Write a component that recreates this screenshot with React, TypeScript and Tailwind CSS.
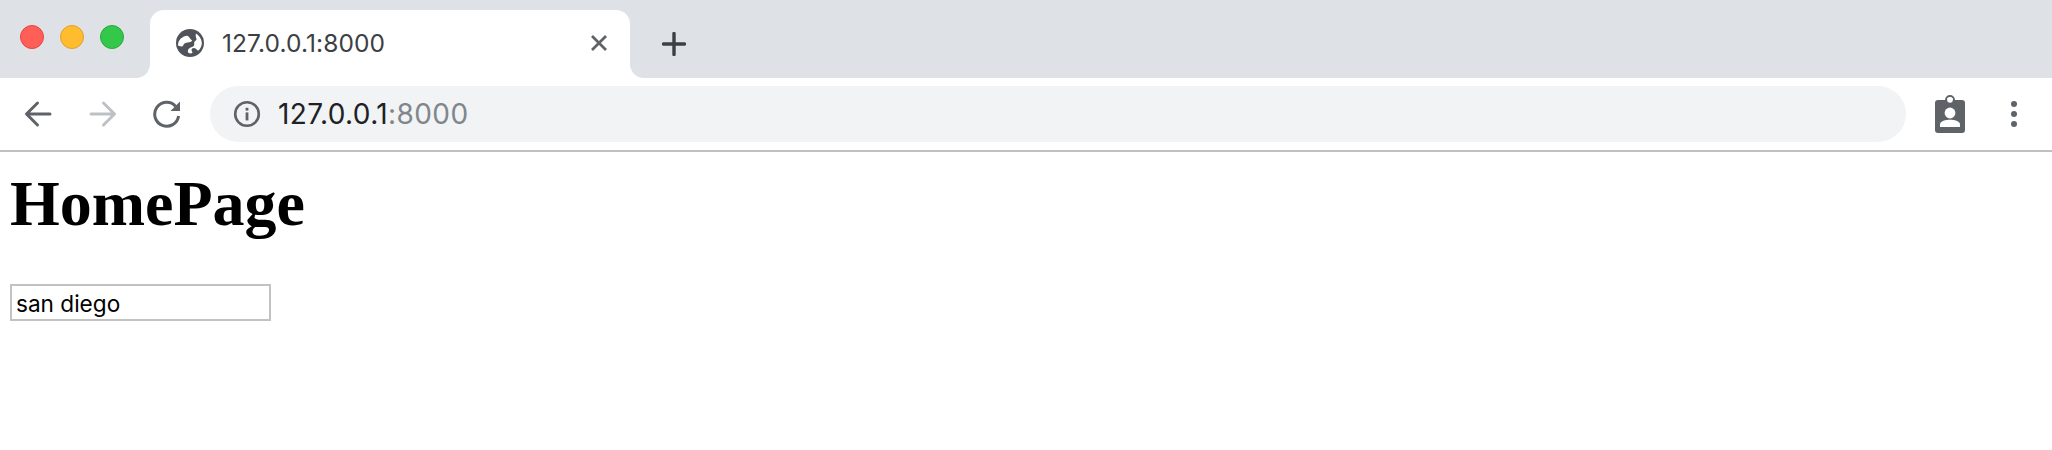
import React from 'react';

const TrafficLights = () => (
  <div className="flex items-center gap-[16px] pl-[20px] pt-[25px]">
    <div className="w-[24px] h-[24px] rounded-full bg-[#ff5f57] border border-[#e2463f]"></div>
    <div className="w-[24px] h-[24px] rounded-full bg-[#febc2e] border border-[#e1a029]"></div>
    <div className="w-[24px] h-[24px] rounded-full bg-[#34c84a] border border-[#28a93a]"></div>
  </div>
);

const GlobeIcon = () => (
  <svg width="28" height="28" viewBox="0 0 28 28" className="shrink-0">
    <circle cx="14" cy="14" r="14" fill="#50545a" />
    <path d="M2 16.5C2 12 4.5 9 8 7.5c2.4-1 4-.8 5 .4 1 1.2 1.6 2.6 3.2 3.4-.4 1.8-2.6 2.2-4.6 2.2-2 .1-3.4.8-4.2 2.4-.6 1.4-1.6 1.8-2.8 1.4-1-.3-2-.4-2.6-.8z" fill="#ffffff" />
    <path d="M20 4.5c2.6 1.6 5.4 4.8 5.8 9 .2 3-1.2 6.4-3.6 8.2-1.6-1-2.2-2.6-4-2.8-2-.2-3 1.2-2.6 2.6.3 1 1 1.6.8 2.4-1 .6-2.4.6-3.6.2-1.2-.6-1.2-2.4-.4-3.8.8-1.4 2.4-2 4.2-2.6 1.4-.6 1.8-1.8 1.6-3.2-.2-1.4.6-2.4 1.6-3 1-.6.8-1.6.4-2.4-.4-1.2-.8-2.6-.2-4.6z" fill="#ffffff" />
  </svg>
);

const BackIcon = ({ color, flip }: { color: string; flip?: boolean }) => (
  <svg width="28" height="28" viewBox="0 0 28 28" className={flip ? 'rotate-180' : ''}>
    <path
      d="M26 14H3M13.5 3 2.5 14l11 11"
      fill="none"
      stroke={color}
      strokeWidth="3"
      strokeLinecap="round"
      strokeLinejoin="round"
    />
  </svg>
);

const ReloadIcon = () => (
  <svg width="28" height="28" viewBox="0 0 28 28">
    <path d="M22.6 6.2A12 12 0 1 0 25.6 16" fill="none" stroke="#5f6368" strokeWidth="3" />
    <path d="M27 1.5V11H17.5z" fill="#5f6368" />
  </svg>
);

const InfoIcon = () => (
  <svg width="28" height="28" viewBox="0 0 28 28" className="shrink-0">
    <circle cx="14" cy="14" r="11.8" fill="none" stroke="#5f6368" strokeWidth="2.6" />
    <rect x="12.6" y="12.4" width="2.8" height="8" fill="#5f6368" />
    <rect x="12.6" y="7.8" width="2.8" height="2.8" fill="#5f6368" />
  </svg>
);

const ClipboardIcon = () => (
  <svg width="30" height="38" viewBox="0 0 30 38">
    <circle cx="15" cy="5" r="4" fill="none" stroke="#5f6368" strokeWidth="2" />
    <rect x="0" y="5" width="30" height="33" rx="3" fill="#5f6368" />
    <circle cx="15" cy="5" r="2.8" fill="#ffffff" />
    <circle cx="15" cy="18" r="5.4" fill="#ffffff" />
    <path d="M5 32v-2.5C5 26 11 24.8 15 24.8s10 1.2 10 4.7V32z" fill="#ffffff" />
  </svg>
);

export default function App() {
  return (
    <div className="min-h-[450px] bg-white font-['Liberation_Serif',serif] text-black">
      {/* tab strip */}
      <div className="flex h-[78px] bg-white">
        <div className="w-[150px] bg-[#dee1e6] rounded-br-[14px]">
          <TrafficLights />
        </div>
        <div className="w-[480px] bg-[#dee1e6] pt-[10px]">
          <div className="flex items-center h-full bg-white rounded-t-[14px] pl-[26px] pr-[22px] pb-[3px]">
            <GlobeIcon />
            <span className="ml-[18px] pt-[2px] text-[24.5px] tracking-[0.1px] text-[#3c4043] font-['Inter',sans-serif]">127.0.0.1:8000</span>
            <svg width="18" height="18" viewBox="0 0 18 18" className="ml-auto">
              <path d="M2 2l14 14M16 2 2 16" stroke="#5f6368" strokeWidth="2.8" fill="none" />
            </svg>
          </div>
        </div>
        <div className="flex flex-1 items-center bg-[#dee1e6] rounded-bl-[14px] pl-[32px] pt-[9px]">
          <svg width="24" height="24" viewBox="0 0 24 24">
            <path d="M12 1.5v21M1.5 12h21" stroke="#3c4043" strokeWidth="3.4" strokeLinecap="round" fill="none" />
          </svg>
        </div>
      </div>

      {/* toolbar */}
      <div className="flex items-center h-[74px] pl-[24px] pr-[24px] border-b-2 border-[#c0c0c0]">
        <BackIcon color="#5f6368" />
        <div className="ml-[37px]">
          <BackIcon color="#bdc1c6" flip />
        </div>
        <div className="ml-[36px]">
          <ReloadIcon />
        </div>
        <div className="flex flex-1 items-center h-[56px] ml-[29px] bg-[#f1f3f4] rounded-full pl-[23px]">
          <InfoIcon />
          <span className="ml-[17px] text-[28px] tracking-[0.4px] text-[#202124] font-['Inter',sans-serif]">
            127.0.0.1<span className="text-[#80868b]">:8000</span>
          </span>
        </div>
        <div className="ml-[29px]">
          <ClipboardIcon />
        </div>
        <div className="flex flex-col gap-[4px] ml-[46px] mr-[11px]">
          <div className="w-[6px] h-[6px] rounded-full bg-[#5f6368]"></div>
          <div className="w-[6px] h-[6px] rounded-full bg-[#5f6368]"></div>
          <div className="w-[6px] h-[6px] rounded-full bg-[#5f6368]"></div>
        </div>
      </div>

      {/* page */}
      <div className="px-[10px]">
        <h1 className="mt-[15px] text-[64px] leading-[74px] font-bold">HomePage</h1>
        <input
          readOnly
          value="san diego"
          className="block mt-[43px] w-[261px] h-[37px] border-2 border-[#c2c2c2] px-[4px] pt-[2px] text-[22.6px] text-black outline-none font-['Inter',sans-serif]"
        />
      </div>
    </div>
  );
}
